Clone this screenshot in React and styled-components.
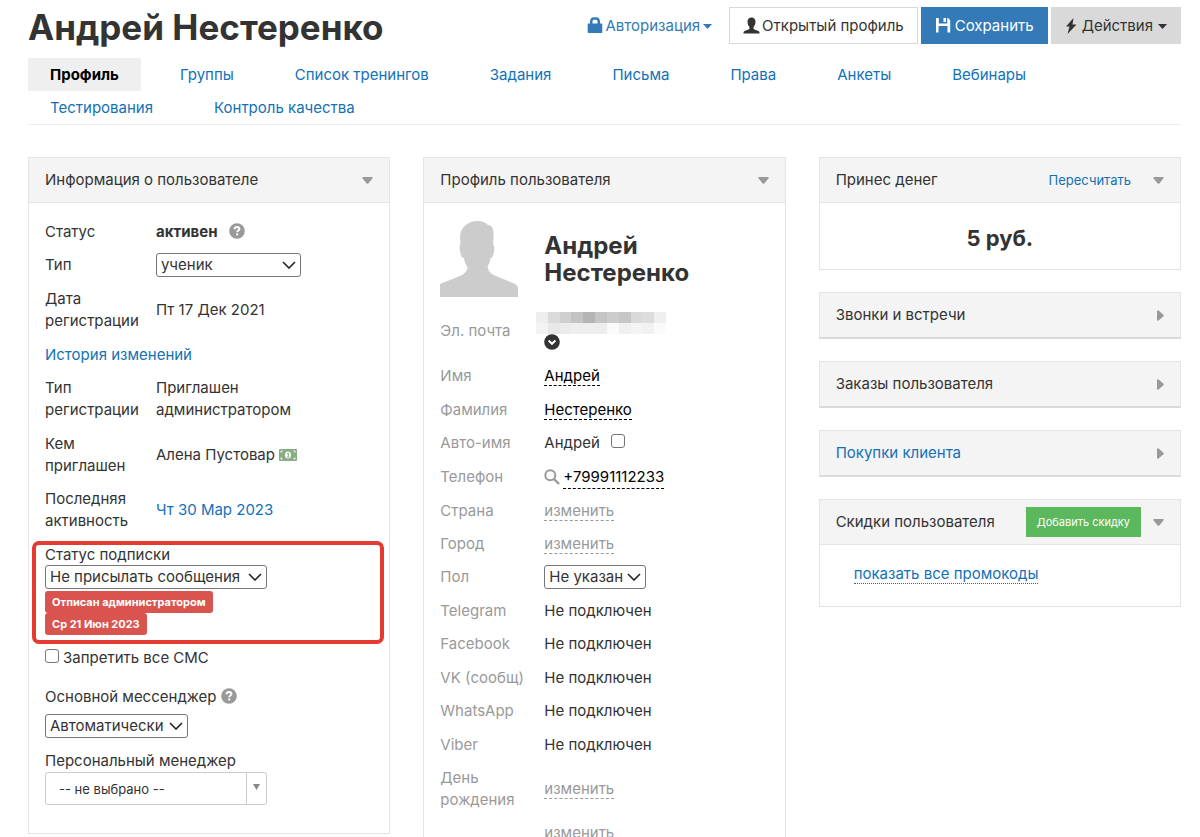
import {useState} from 'react';
import styled, {createGlobalStyle, css} from 'styled-components';

const GlobalStyle = createGlobalStyle`
  * {
    box-sizing: border-box;
  }

  body {
    margin: 0;
    background: #fff;
    color: #333;
    font: 15px/22px Inter, "Liberation Sans", sans-serif;
  }

  button, select, input {
    font: inherit;
    color: inherit;
  }

  svg {
    flex: none;
  }
`

const Page = styled.div`
  padding: 7px 19px 0 28px;
  height: 100vh;
  overflow: hidden;
`

const Header = styled.header`
  display: flex;
  justify-content: space-between;
  align-items: flex-start;
  height: 51px;
`

const Title = styled.h1`
  margin: 0;
  font-size: 35px;
  line-height: 40px;
  font-weight: 700;
`

const Toolbar = styled.div`
  display: flex;
  align-items: center;
  gap: 3px;
`

const Button = styled.button`
  display: flex;
  align-items: center;
  gap: ${props => props.$gap || 2}px;
  height: 37px;
  padding: 0 13px;
  border: 1px solid ${props => props.$border || props.$bg};
  background: ${props => props.$bg};
  color: ${props => props.$color || '#333'};
  font-size: 15px;
  white-space: nowrap;
  cursor: pointer;
`

const AuthButton = styled(Button)`
  padding: 0;
  margin-right: 13px;
`

const Tabs = styled.nav`
  display: flex;
  flex-wrap: wrap;
  column-gap: 17px;
  border-bottom: 1px solid #eee;
`

const Tab = styled.a`
  padding: 0 22px;
  line-height: 33px;
  color: #1271b8;
  text-decoration: none;
  ${props => props.$active && css`
    background: #efefef;
    color: #000;
    font-weight: 700;
  `}
`

const Columns = styled.main`
  display: grid;
  grid-template-columns: repeat(3, minmax(0, 1fr));
  gap: 33px;
  align-items: start;
  margin-top: 32px;
`

const Column = styled.div`
  display: flex;
  flex-direction: column;
  gap: 22px;
`

const Card = styled.section`
  border: 1px solid #e4e4e4;
  border-bottom-width: ${props => props.$closed ? 2 : 1}px;
  border-bottom-color: ${props => props.$closed ? '#dadada' : '#e4e4e4'};
`

const CardHead = styled.header`
  display: flex;
  align-items: center;
  height: ${props => props.$closed ? 44 : 45}px;
  padding: 0 16px;
  background: #f4f4f4;
  border-bottom: ${props => props.$closed ? 0 : 1}px solid #e4e4e4;
`

const CardTitle = styled.h2`
  flex: 1;
  margin: 0;
  font-size: 15px;
  font-weight: 400;
`

const Toggle = styled.button`
  display: flex;
  padding: 0;
  margin-left: ${props => props.$gap || 0}px;
  border: 0;
  background: none;
  color: #999;
  cursor: pointer;
`

const CardBody = styled.div`
  padding: ${props => props.$pad || '12px 16px 28px'};
`

const Link = styled.a`
  color: #1271b8;
  font-size: ${props => props.$small ? 13 : 15}px;
  text-decoration: none;
`

const PromoLink = styled(Link)`
  border-bottom: 1px dotted #1271b8;
`

const GreenButton = styled.button`
  height: 30px;
  padding: 0 11px;
  border: 0;
  background: #5cb85c;
  color: #fff;
  font-size: 11px;
  line-height: 30px;
  cursor: pointer;
`

const Money = styled.div`
  color: #333;
  font-size: 22px;
  line-height: 30px;
  font-weight: 700;
  text-align: center;
`

const Table = styled.table`
  width: 100%;
  border-collapse: collapse;
  table-layout: fixed;
`

const Label = styled.th`
  width: ${props => props.$width || 111}px;
  height: ${props => props.$height || 33}px;
  padding: 0 0 ${props => props.$bottom || 0}px;
  color: ${props => props.$muted ? '#999' : '#333'};
  font-weight: 400;
  text-align: left;
`

const Value = styled.td`
  padding: 0 0 ${props => props.$bottom || 0}px;
`

const Line = styled.div`
  display: flex;
  align-items: center;
  gap: ${props => props.$gap || 4}px;
`

const Narrow = styled.div`
  max-width: 150px;
`

const Editable = styled.a`
  color: ${props => props.$muted ? '#999' : '#000'};
  text-decoration: none;
  border-bottom: 1px dashed currentColor;
`

const SelectBox = styled.span`
  position: relative;
  display: flex;
  width: ${props => props.$width}px;

  svg {
    position: absolute;
    right: 5px;
    top: 8px;
    pointer-events: none;
  }
`

const NativeSelect = styled.select`
  appearance: none;
  width: 100%;
  height: 24px;
  padding: 0 20px 0 4px;
  border: 1px solid #767676;
  border-radius: 3px;
  background: #fff;
  line-height: 20px;
`

const ManagerBox = styled(SelectBox)`
  svg {
    right: 7px;
    top: 12px;
  }

  &::after {
    content: '';
    position: absolute;
    top: 1px;
    bottom: 1px;
    right: 20px;
    border-left: 1px solid #ccc;
    pointer-events: none;
  }
`

const ManagerSelect = styled(NativeSelect)`
  height: 33px;
  padding-left: 13px;
  border-color: #ccc;
  font-size: 13px;
`

const Highlight = styled.div`
  margin: 4px -11px 0 -13px;
  padding: 0 8px 5px 9px;
  border: 4px solid #e53a30;
  border-radius: 7px;
`

const FieldLabel = styled.label`
  display: block;
  line-height: ${props => props.$tight ? 20 : 22}px;
`

const Badges = styled.div`
  display: flex;
  flex-direction: column;
  align-items: flex-start;
  margin-top: 2px;
`

const Badge = styled.span`
  padding: 0 7px;
  border-radius: 3px;
  background: #d9534f;
  color: #fff;
  font-size: 11px;
  line-height: 22px;
  font-weight: 700;
`

const CheckLine = styled.label`
  display: flex;
  align-items: center;
  gap: 4px;
  margin-top: 3px;
`

const Checkbox = styled.input`
  appearance: none;
  width: 14px;
  height: 14px;
  margin: 0 0 5px;
  border: 1px solid #767676;
  border-radius: 3px;
  background: #fff;

  &:checked {
    background: #337ab7;
  }
`

const Field = styled.div`
  margin-top: ${props => props.$top}px;
`

const Profile = styled.div`
  display: flex;
  gap: 26px;
  margin-bottom: 11px;
`

const Name = styled.h3`
  margin: 11px 0 0;
  max-width: 160px;
  font-size: 24px;
  line-height: 27px;
  font-weight: 700;
`

const Email = styled.div`
  display: flex;
  flex-direction: column;
  margin-left: -8px;
`

const EmailToggle = styled(Toggle)`
  margin-left: 8px;
  color: #333;
`

const LockIcon = () => (
  <svg width="16" height="17" viewBox="0 0 16 17" fill="currentColor">
    <path fillRule="evenodd" d="M3 6.500V4.400C3 1.900 4.800.300 7 .300h2c2.200 0 4 1.600 4 4.100v2.100h1.500c.5 0 .8.300.8.800v8c0 .5-.3.800-.8.800h-13c-.5 0-.8-.3-.8-.8v-8c0-.5.3-.8.8-.8zm2.500 0h5V4.600c0-1.300-.7-1.900-1.800-1.900H7.300c-1.100 0-1.800.6-1.800 1.900z"/>
  </svg>
)

const PersonIcon = () => (
  <svg width="17" height="17" viewBox="0 0 17 17" fill="currentColor">
    <path d="M8.500.500c2.500 0 4 1.700 4 4 0 2.300-.8 4.300-2 5.400v1.300c0 .6.400 1 1 1.300l3.300 1.300c1 .4 1.700 1 1.700 2V16.500H.500v-.7c0-1 .7-1.600 1.700-2l3.300-1.300c.6-.3 1-.7 1-1.300V9.900c-1.200-1.100-2-3.100-2-5.400 0-2.300 1.500-4 4-4z"/>
  </svg>
)

const SaveIcon = () => (
  <svg width="16" height="17" viewBox="0 0 16 17" fill="currentColor">
    <path fillRule="evenodd" d="M1 1h2.800v5.500h8.400V1h.8l2.200 2.200V15.500h-2.700V9h-9v6.500H1zM8.500 1H11v4H8.500z"/>
  </svg>
)

const BoltIcon = () => (
  <svg width="12" height="16" viewBox="0 0 12 16" fill="currentColor">
    <path d="M8.500 0 1 8.500h3.500L2.500 16 11.500 6.500H7.500z"/>
  </svg>
)

const CaretIcon = () => (
  <svg width="9" height="7" viewBox="0 0 9 7" fill="currentColor"><path d="M0 2h9L4.500 7z"/></svg>
)

const TriangleIcon = ({right}) => right ? (
  <svg width="7" height="11" viewBox="0 0 7 11" fill="currentColor"><path d="M0 1.200C0 .2.800 0 1.500.600L6.200 4.500c.8.600.8 1.400 0 2L1.500 10.400c-.7.600-1.500.400-1.500-.6z"/></svg>
) : (
  <svg width="11" height="7" viewBox="0 0 11 7" fill="currentColor"><path d="M1.200 0h8.600c1 0 1.200.8.600 1.500L6.500 6.200c-.6.800-1.400.8-2 0L.600 1.500C0 .8.200 0 1.200 0z"/></svg>
)

const HelpIcon = () => (
  <svg width="16" height="18" viewBox="0 0 16 18">
    <circle cx="8" cy="8" r="7.800" fill="#999"/>
    <path d="M5.600 6.200C5.700 4.600 6.700 4 8 4c1.400 0 2.400.8 2.400 2C10.400 7.500 8.200 7.500 8.200 9.200" fill="none" stroke="#fff" strokeWidth="2"/>
    <path d="M7.200 10.400h2v2h-2z" fill="#fff"/>
  </svg>
)

const MoneyIcon = () => (
  <svg width="18" height="12" viewBox="0 0 18 12">
    <rect width="18" height="12" rx="1" fill="#8aac85"/>
    <path d="M2 3.500V2h1.500M14.500 2H16v1.500M16 8.500V10h-1.500M3.500 10H2V8.500" fill="none" stroke="#fff"/>
    <ellipse cx="9" cy="6" rx="3" ry="3.500" fill="#fff"/>
    <path d="M8 4.800 9.300 4v4M8 8h2.500" fill="none" stroke="#8aac85"/>
  </svg>
)

const ChevronIcon = () => (
  <svg width="14" height="8" viewBox="0 0 14 8" fill="none" stroke="#222" strokeWidth="1.600"><path d="M1 1l6 6 6-6"/></svg>
)

const SearchIcon = () => (
  <svg width="16" height="16" viewBox="0 0 16 16" fill="none" stroke="#999" strokeWidth="2">
    <circle cx="6.300" cy="6.300" r="5"/>
    <path d="M10 10l5 5" strokeWidth="2.400"/>
  </svg>
)

const CircleDownIcon = () => (
  <svg width="16" height="16" viewBox="0 0 16 16">
    <circle cx="8" cy="8" r="7.800" fill="currentColor"/>
    <path d="M4.600 6.600 8 9.800l3.400-3.200" fill="none" stroke="#fff" strokeWidth="2"/>
  </svg>
)

const Avatar = () => (
  <svg width="78" height="76" viewBox="0 0 78 76" fill="#ccc">
    <path d="M20 17C20 6 28 0 38 0c5 0 8 2 10 4 4 0 6 4 5.500 12l-.5 8c2 1 1.500 5 .5 9-.5 3-2 4-3 4-.5 4-1.500 6-3 8.500.5 4 3 7 6 8.500l19.500 8c3 1.500 5 2.500 5 5v18H0V63l21-8.500c4-2 6.500-5 6.500-8.500-2-3-3-5-3.500-9-2 0-3-2-3.500-5-1-4-1.500-7 0-8z"/>
  </svg>
)

const mosaic = [
  ['#eee', '#dbdbdb', '#cfcfcf', '#c3c3c3', '#b4b4b4', '#c5c5c5', '#ccc', '#c6c6c6', '#d9d9d9', '#ddd', '#efefef'],
  ['#f3f3f3', '#e8e8e8', '#ebebeb', '#eee', '#eee', '#ededed', '#fafafa', '#f0f0f0', '#f4f4f4', '#f1f1f1', '#fafafa'],
]

const HiddenEmail = () => (
  <svg width="130" height="22" viewBox="0 0 132 24" preserveAspectRatio="none" shapeRendering="crispEdges">
    {mosaic.map((row, y) => row.map((fill, x) => (
      <rect key={x + '-' + y} x={x * 12} y={y * 12} width="12" height="12" fill={fill}/>
    )))}
  </svg>
)

const Select = ({width, children, ...rest}) => (
  <SelectBox $width={width}>
    <NativeSelect {...rest}><option>{children}</option></NativeSelect>
    <ChevronIcon/>
  </SelectBox>
)

const Panel = ({title, extra, extraGap, pad, defaultOpen = true, children}) => {
  const [open, setOpen] = useState(defaultOpen)

  return (
    <Card $closed={!open}>
      <CardHead $closed={!open}>
        <CardTitle>{title}</CardTitle>
        {extra}
        <Toggle $gap={extraGap} aria-label="Свернуть" onClick={() => setOpen(!open)}>
          <TriangleIcon right={!open}/>
        </Toggle>
      </CardHead>
      {open && <CardBody $pad={pad}>{children}</CardBody>}
    </Card>
  )
}

const InfoRow = ({label, height, children}) => (
  <tr>
    <Label scope="row" $height={height}>{label}</Label>
    <Value>{children}</Value>
  </tr>
)

const ProfileRow = ({label, height, bottom, children}) => (
  <tr>
    <Label scope="row" $muted $width={104} $height={height} $bottom={bottom}>{label}</Label>
    <Value $bottom={bottom}>{children}</Value>
  </tr>
)

const tabs = ['Профиль', 'Группы', 'Список тренингов', 'Задания', 'Письма', 'Права', 'Анкеты', 'Вебинары', 'Тестирования', 'Контроль качества']
const messengers = ['Telegram', 'Facebook', 'VK (сообщ)', 'WhatsApp', 'Viber']

export default function App() {
  return (
    <Page>
      <GlobalStyle/>
      <Header>
        <Title>Андрей Нестеренко</Title>
        <Toolbar>
          <AuthButton $bg="transparent" $color="#337ab7" $gap={3}><LockIcon/>Авторизация<CaretIcon/></AuthButton>
          <Button $bg="#fff" $border="#d9d9d9"><PersonIcon/>Открытый профиль</Button>
          <Button $bg="#337ab7" $color="#fff" $gap={4}><SaveIcon/>Сохранить</Button>
          <Button $bg="#d9d9d9" $gap={5}><BoltIcon/>Действия<CaretIcon/></Button>
        </Toolbar>
      </Header>
      <Tabs>
        {tabs.map((tab, i) => <Tab key={tab} href="#" $active={i === 0}>{tab}</Tab>)}
      </Tabs>
      <Columns>
        <Panel title="Информация о пользователе">
          <Table>
            <tbody>
              <InfoRow label="Статус"><Line $gap={12}><b>активен</b><HelpIcon/></Line></InfoRow>
              <InfoRow label={<label htmlFor="type">Тип</label>} height={34}>
                <Select id="type" width={145}>ученик</Select>
              </InfoRow>
              <InfoRow label="Дата регистрации" height={56}>Пт 17 Дек 2021</InfoRow>
              <tr>
                <Value colSpan="2" height="33"><Link href="#">История изменений</Link></Value>
              </tr>
              <InfoRow label="Тип регистрации" height={56}><Narrow>Приглашен администратором</Narrow></InfoRow>
              <InfoRow label="Кем приглашен" height={55}><Line>Алена Пустовар<MoneyIcon/></Line></InfoRow>
              <InfoRow label="Последняя активность" height={55}><Link href="#">Чт 30 Мар 2023</Link></InfoRow>
            </tbody>
          </Table>
          <Highlight>
            <FieldLabel htmlFor="subscription" $tight>Статус подписки</FieldLabel>
            <Select id="subscription" width={222}>Не присылать сообщения</Select>
            <Badges>
              <Badge>Отписан администратором</Badge>
              <Badge>Ср 21 Июн 2023</Badge>
            </Badges>
          </Highlight>
          <CheckLine><Checkbox type="checkbox"/>Запретить все СМС</CheckLine>
          <Field $top={17}>
            <Line><FieldLabel htmlFor="messenger">Основной мессенджер</FieldLabel><HelpIcon/></Line>
          </Field>
          <Field $top={6}>
            <Select id="messenger" width={143}>Автоматически</Select>
          </Field>
          <Field $top={12}>
            <FieldLabel htmlFor="manager">Персональный менеджер</FieldLabel>
            <ManagerBox $width={222}>
              <ManagerSelect id="manager"><option>-- не выбрано --</option></ManagerSelect>
              <svg width="7" height="6" viewBox="0 0 7 6" fill="#888"><path d="M0 0h7L3.500 6z"/></svg>
            </ManagerBox>
          </Field>
        </Panel>

        <Panel title="Профиль пользователя" pad="18px 16px 16px">
          <Profile>
            <Avatar/>
            <Name>Андрей Нестеренко</Name>
          </Profile>
          <Table>
            <tbody>
              <ProfileRow label="Эл. почта" height={51} bottom={5}>
                <Email>
                  <HiddenEmail/>
                  <EmailToggle aria-label="Показать"><CircleDownIcon/></EmailToggle>
                </Email>
              </ProfileRow>
              <ProfileRow label="Имя" height={34}><Editable href="#">Андрей</Editable></ProfileRow>
              <ProfileRow label="Фамилия"><Editable href="#">Нестеренко</Editable></ProfileRow>
              <ProfileRow label={<label htmlFor="autoname">Авто-имя</label>} height={34}>
                <Line $gap={11}>Андрей<Checkbox id="autoname" type="checkbox"/></Line>
              </ProfileRow>
              <ProfileRow label="Телефон" height={34}>
                <Line $gap={3}><SearchIcon/><Editable href="#">+79991112233</Editable></Line>
              </ProfileRow>
              <ProfileRow label="Страна"><Editable href="#" $muted>изменить</Editable></ProfileRow>
              <ProfileRow label="Город"><Editable href="#" $muted>изменить</Editable></ProfileRow>
              <ProfileRow label={<label htmlFor="sex">Пол</label>} height={34}>
                <Select id="sex" width={102}>Не указан</Select>
              </ProfileRow>
              {messengers.map((name, i) => (
                <ProfileRow key={name} label={name} height={i % 2 ? 34 : 33}>Не подключен</ProfileRow>
              ))}
              <ProfileRow label={<>День<br/>рождения</>} height={55}><Editable href="#" $muted>изменить</Editable></ProfileRow>
              <ProfileRow label=""><Editable href="#" $muted>изменить</Editable></ProfileRow>
            </tbody>
          </Table>
        </Panel>

        <Column>
          <Panel title="Принес денег" pad="20px 16px 16px" extraGap={22} extra={<Link href="#" $small>Пересчитать</Link>}>
            <Money>5 руб.</Money>
          </Panel>
          <Panel title="Звонки и встречи" defaultOpen={false}/>
          <Panel title="Заказы пользователя" defaultOpen={false}/>
          <Panel title={<Link href="#">Покупки клиента</Link>} defaultOpen={false}/>
          <Panel title="Скидки пользователя" pad="18px 34px 21px" extraGap={12} extra={<GreenButton>Добавить скидку</GreenButton>}>
            <PromoLink href="#">показать все промокоды</PromoLink>
          </Panel>
        </Column>
      </Columns>
    </Page>
  )
}
